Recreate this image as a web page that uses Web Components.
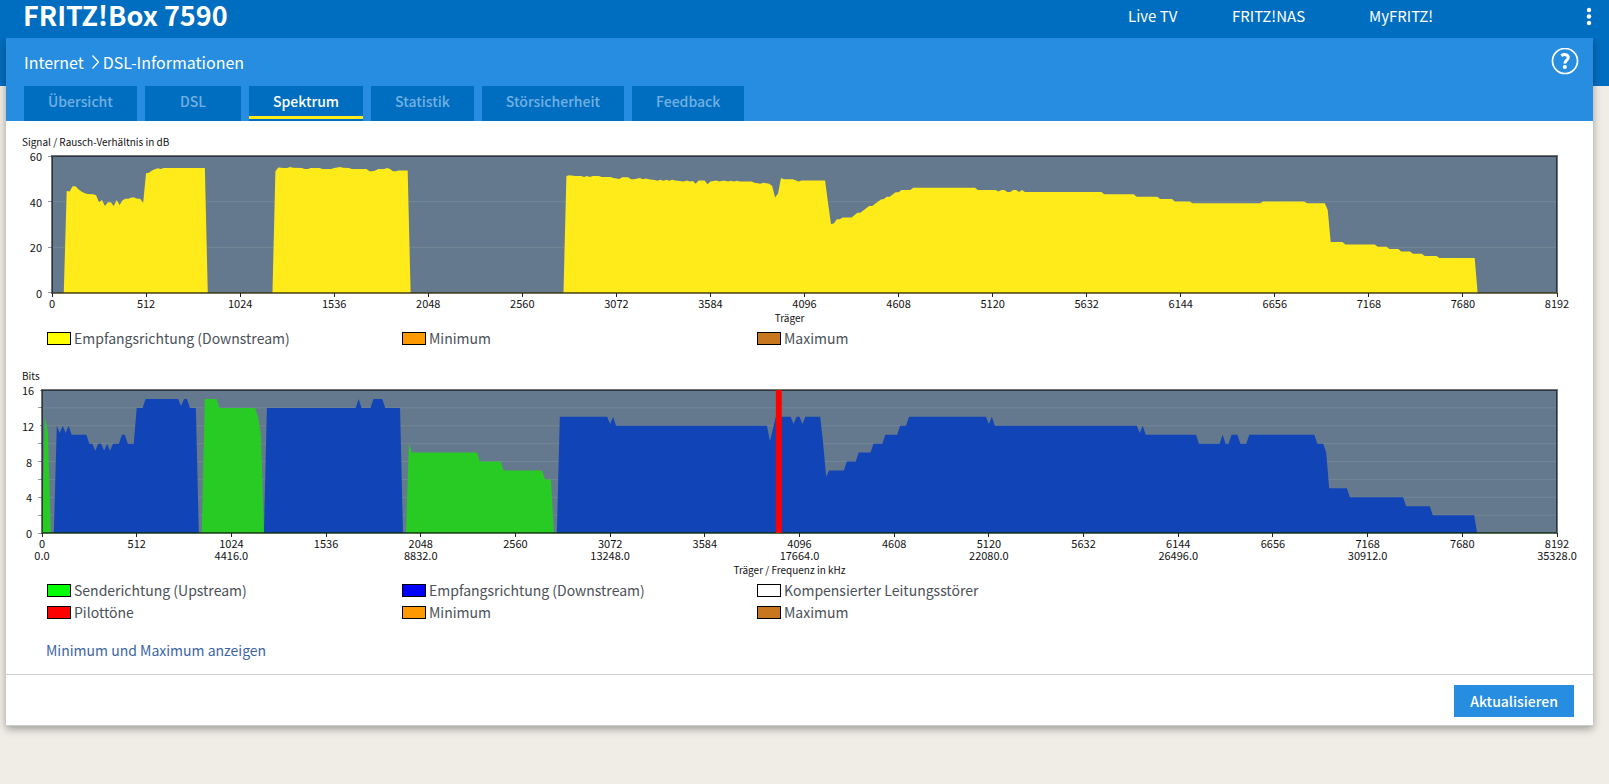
<!DOCTYPE html>
<html lang="de">
<head>
<meta charset="utf-8">
<meta name="viewport" content="width=device-width, initial-scale=1">
<title>FRITZ!Box 7590</title>
<style>
  body { margin: 0; font: 14px/22px "Noto Sans CJK SC", "Noto Sans", sans-serif; color: #4a5157; background: #f0ede6; }
</style>
</head>
<body>
<fritz-app>
  <fritz-header slot="header"></fritz-header>
  <fritz-panel>
    <fritz-tabs slot="tabs"></fritz-tabs>
    <spectrum-chart id="snr"></spectrum-chart>
    <chart-legend id="snr-legend"></chart-legend>
    <spectrum-chart id="bits"></spectrum-chart>
    <chart-legend id="bits-legend"></chart-legend>
    <a slot="link" href="#minmax">Minimum und Maximum anzeigen</a>
  </fritz-panel>
</fritz-app>

<script>
const LEGENDS = {
  'snr-legend': [['#ff0', 'Empfangsrichtung (Downstream)'], ['#f90', 'Minimum'], ['#c7771e', 'Maximum']],
  'bits-legend': [['#0f0', 'Senderichtung (Upstream)'], ['#00f', 'Empfangsrichtung (Downstream)'], ['#fff', 'Kompensierter Leitungsstörer'],
                  ['#f00', 'Pilottöne'], ['#f90', 'Minimum'], ['#c7771e', 'Maximum']]
};

// Each series lists "position value" pairs; one position covers 16 carriers.
const CHARTS = {
  snr: {
    unit: 'Signal / Rausch-Verhältnis in dB', axis: 'Träger', scale: 30, height: 137,
    max: 60, step: 20, label: 20, base: '#ffeb1a',
    series: [['#ffeb1a', `
      4 0 5 44.7 6 44.4 7 46.7 8 46.7 9 45.4 10 44.4 11 43.8 12 43.4 14 43.3 15 42.8 16 39.7 17 40.7 18 38.1 19 39.7 20 39.7
      21 38.1 22 40.7 23 38.5 24 40.6 25 41.3 26 41.3 27 41.8 28 41.8 29 41.3 30 41.3 31 39.4 32 52.5 33 52.7 34 53.7 35 54.2
      36 54.6 37 54.3 38 54.7 52 54.7 53 0
      75 0 76 53.3 77 55 78 54.8 79 54.7 80 54.7 81 55.2 82 54.8 85 54.7 86 54.3 87 54.3 88 54.7 91 54.7 92 54.3 95 54.3
      96 54.7 98 55.2 99 54.8 101 54.7 102 54.3 107 54.3 108 53.3 109 53.3 110 53.7 111 54.3 113 54.3 114 54.7 115 54.3
      116 53.3 117 53.3 118 53.7 121 53.7 122 0
      174 0 175 51.2 176 51.6 178 51.2 180 51.2 181 50.8 182 51.2 183 50.8 184 51.2 186 51.2 187 50.8 190 50.8 191 50.4
      193 49.9 194 50.7 196 50.7 197 49.8 198 49.8 200 50.4 201 49.8 202 50.2 203 49.8 205 49.5 206 49.2 207 49.6 208 49.2
      209 49.6 210 49.2 211 49.6 212 49.3 215 48.8 216 49.3 217 48.8 218 49 219 47.9 220 49.3 222 49.3 223 47.6 224 48.8
      226 49.3 227 48.8 228 49.2 229 49.2 230 48.8 231 49.2 232 48.8 233 49.2 234 48.8 238 48.8 239 48.3 241 47.9 242 48.3
      244 47.9 245 46.9 246 41.8 247 43.6 248 50.4 249 49.8 252 49.8 254 48.8 255 49.3
      263 49.3 264 39.5 265 30.2 266 30.4 267 32.3 268 32.3 269 33.1 272 33.1 274 35.2 275 35.2 278 38.1 279 38.1 282 41
      283 41.2 284 42.2 285 42.2 287 44.1 288 44.1 289 45.1 292 45.1 293 46.1 314 46.1 315 45.1 321 45.1 322 44.4 323 45.1
      324 45.1 325 44.2 326 44.2 327 45.1 328 45.1 329 44.2 330 45.1 331 44.2 357 44.2 358 43.2 368 43.2 369 42.2 376 42.2
      377 41.2 381 41.2 382 40.1 387 40.1 388 39.3 411 39.3 412 40.1 426 40.1 427 39.3 433 39.3 434 36.4 435 22.3 439 22.3
      440 21.2 450 21.2 451 20.3 454 20.3 455 19.3 458 19.3 459 18.2 462 18.2 463 17.2 466 17.2 467 16.2 471 16.2 472 15.3
      484 15.3 485 0`]]
  },
  bits: {
    unit: 'Bits', axis: 'Träger / Frequenz in kHz', scale: 20, height: 143,
    max: 16, step: 2, label: 4, base: '#28cb23', frequency: true, pilot: 248,
    series: [['#28cb23', `
      0 0 1 13 2 11.3 3 0
      54 0 55 15 59 15 60 14 72 14 73 13 74 11 75 0
      123 0 124 10 125 9 147 9 148 8 155 8 156 7 169 7 170 6 172 6 173 0`],
    ['#1145b7', `
      4 0 5 12 6 11.2 7 12 8 11.2 9 12 10 11 15 11 16 10 17 10 18 9.2 19 10 20 10 21 9.2 22 10 23 9.2 24 10 26 10 27 11 28 11
      29 10 31 10 32 14 34 14 35 15 46 15 47 14.2 48 15 49 15 50 14 52 14 53 0
      75 0 76 14 106 14 107 15 108 14 111 14 112 15 115 15 116 14 121 14 122 0
      174 0 175 13 191 13 192 12.2 193 13 194 12 245 12 246 10.3 247 11.6 248 13 253 13 254 12.2 255 13 256 13 257 12.2
      258 13 263 13 264 10 265 6.3 266 7 271 7 272 8 275 8 276 9 280 9 281 10 284 10 285 11 289 11 290 12 292 12 293 13
      319 13 320 12.2 321 13 322 12 370 12 371 11.2 372 12 373 11 390 11 391 10 398 10 399 11 400 10 401 10 402 11 404 11
      405 10 407 10 408 11 430 11 431 10 433 10 434 9 435 5 441 5 442 4 460 4 461 3 469 3 470 2 484 2 485 0`]]
  }
};

const define = (name, html, setup) => {
  const template = document.createElement('template');
  template.innerHTML = html;
  customElements.define(name, class extends HTMLElement {
    constructor() {
      super();
      this.attachShadow({ mode: 'open' }).append(template.content.cloneNode(true));
    }
    connectedCallback() { if (setup) setup(this, this.shadowRoot); }
  });
};

define('fritz-app', `
  <style>
    :host { display: block; min-height: 100vh; background: linear-gradient(#006ec0 86px, #f0ede6 0); }
  </style>
  <slot name="header"></slot><slot></slot>`);

define('fritz-header', `
  <style>
    :host { display: block; height: 38px; color: #fff; font-size: 15px; }
    header { display: flex; align-items: flex-start; padding: 0 12px 0 23px; }
    h1 { margin: 0; flex: 1; font-size: 27px; line-height: 30px; font-weight: 700; white-space: nowrap; }
    nav { display: grid; grid-template-columns: 104px 137px 212px; line-height: 32px; }
    a { color: inherit; text-decoration: none; }
    button { width: 16px; height: 32px; padding: 0; border: 0; background: none; display: block; }
    svg { display: block; }
  </style>
  <header>
    <h1>FRITZ!Box 7590</h1>
    <nav><a href="#tv">Live TV</a><a href="#nas">FRITZ!NAS</a><a href="#my">MyFRITZ!</a></nav>
    <button aria-label="Menü"><svg width="16" height="32" fill="#fff"><circle cx="8" cy="10" r="2.2"/><circle cx="8" cy="16.500" r="2.2"/><circle cx="8" cy="23" r="2.2"/></svg></button>
  </header>`);

define('fritz-tabs', `
  <style>
    :host { display: block; }
    nav { display: flex; gap: 8px; }
    a { box-sizing: border-box; height: 35px; padding: 0 24px; line-height: 30px; font-weight: 500; text-decoration: none; color: #73b0e2; background: #006ec0; }
    a[aria-current] { color: #fff; background: linear-gradient(#ffeb1a, #ffeb1a) 0 30px / 100% 3px no-repeat #006ec0; }
    a.short { padding: 0 35px; }
  </style>
  <nav>
    <a href="#overview">Übersicht</a><a class="short" href="#dsl">DSL</a><a href="#spectrum" aria-current="page">Spektrum</a><a href="#stats">Statistik</a><a href="#stability">Störsicherheit</a><a href="#feedback">Feedback</a>
  </nav>`);

define('fritz-panel', `
  <style>
    :host { display: block; margin: 0 16px 0 6px; background: #fff; box-shadow: 0 1px 0 #ccc, 0 4px 8px rgba(0,0,0,.35); clip-path: inset(0 -16px -20px -6px); }
    .head { background: #268de0; padding: 0 14px 0 18px; color: #fff; }
    .crumbs { display: flex; align-items: center; height: 48px; font-size: 16px; }
    .crumbs a { color: inherit; text-decoration: none; }
    .crumbs .chevron { margin: 0 2px 0 7px; }
    .help { margin-left: auto; width: 28px; height: 28px; padding: 0; border: 0; background: none; }
    svg { display: block; }
    main { padding: 14px 36px 13px 16px; }
    .link { margin: 16px 0 0 24px; }
    ::slotted(a) { color: #3c65a4; text-decoration: none; }
    footer { display: flex; justify-content: flex-end; padding: 10px 19px 8px; border-top: 1px solid #ccd0ce; }
    .refresh { height: 32px; padding: 0 16px; border: 0; font: inherit; font-weight: 500; color: #fff; background: #268de0; }
  </style>
  <div class="head">
    <div class="crumbs">
      <a href="#internet">Internet</a>
      <svg class="chevron" width="10" height="16" fill="none" stroke="#fff" stroke-width="1.3"><path d="M1.500 1.500 7.500 8l-6 6.500"/></svg>
      <span>DSL-Informationen</span>
      <button class="help" aria-label="Hilfe"><svg width="28" height="28" fill="none" stroke="#fff"><circle cx="14" cy="13" r="12.500" stroke-width="1.700"/><path d="M10.300 7.700c2.600-1.900 7-1.300 7 1.900 0 2.500-3.400 2.800-3.400 6" stroke-width="3"/><circle cx="13.800" cy="19" r="2.100" fill="#fff" stroke="none"/></svg></button>
    </div>
    <slot name="tabs"></slot>
  </div>
  <main><slot></slot><div class="link"><slot name="link"></slot></div></main>
  <footer><button class="refresh">Aktualisieren</button></footer>`);

define('chart-legend', `
  <style>
    :host { display: block; margin: 3px 0 20px 25px; }
    :host(:last-of-type) { margin-bottom: 0; }
    ul { display: grid; grid-template-columns: repeat(3, 1fr); max-width: 1065px; margin: 0; padding: 0; list-style: none; }
    li { display: flex; align-items: center; gap: 3px; white-space: nowrap; }
    i { box-sizing: border-box; width: 24px; height: 13px; border: 1px solid #000; }
  </style>
  <ul></ul>`, (el, root) => {
    root.querySelector('ul').innerHTML = LEGENDS[el.id]
      .map(([color, text]) => `<li><i style="background:${color}"></i><span>${text}</span></li>`).join('');
  });

define('spectrum-chart', `
  <style>
    :host { display: block; color: #111; font-size: 11px; line-height: 12px; }
    .unit, .axis { font-size: 10px; line-height: 14px; }
    .unit { margin-bottom: 7px; }
    .axis { text-align: center; line-height: 12px; margin-top: 3px; }
    .plot { display: grid; grid-template-columns: var(--scale) 1fr; }
    .y { display: flex; flex-direction: column; justify-content: space-between; }
    .y span { display: flex; align-items: center; justify-content: flex-end; gap: 6px; height: 0; }
    .y span::after { content: ""; width: 4px; height: 1px; background: #8d9cab; }
    svg { display: block; width: 100%; height: var(--height); overflow: visible; }
    svg * { vector-effect: non-scaling-stroke; }
    .x { grid-column: 2; display: flex; justify-content: space-between; }
    .x span { width: 0; display: flex; flex-direction: column; align-items: center; white-space: nowrap; }
    .x span::before { content: ""; width: 1px; height: 4px; flex: none; background: #222; }
    .x b { font-weight: 400; }
  </style>
  <div class="unit"></div>
  <div class="plot"><div class="y"></div><svg preserveAspectRatio="none"></svg><div class="x"></div></div>
  <div class="axis"></div>`, (el, root) => {
    const c = CHARTS[el.id];
    const $ = s => root.querySelector(s);
    el.style.setProperty('--scale', c.scale + 'px');
    el.style.setProperty('--height', c.height + 'px');
    $('.unit').textContent = c.unit;
    $('.axis').textContent = c.axis;
    let y = '', grid = '', x = '';
    for (let v = c.max; v >= 0; v -= c.step) {
      y += `<span>${v % c.label ? '' : v}</span>`;
      if (v && v < c.max) grid += `<path d="M0 ${c.max - v}H512" stroke="#fff" stroke-opacity=".1"/>`;
    }
    for (let i = 0; i <= 16; i++)
      x += `<span>${i * 512}${c.frequency && i % 2 === 0 ? `<b>${(i * 2208).toFixed(1)}</b>` : ''}</span>`;
    $('.y').innerHTML = y;
    $('.x').innerHTML = x;
    const areas = c.series.map(([color, data]) => {
      const n = data.trim().split(/\s+/).map(Number);
      let d = `M0 ${c.max}`;
      for (let i = 0; i < n.length; i += 2) d += `L${n[i]} ${+(c.max - n[i + 1]).toFixed(2)}`;
      return `<path d="${d}L512 ${c.max}" fill="${color}"/>`;
    }).join('');
    const svg = $('svg');
    svg.setAttribute('viewBox', `0 0 512 ${c.max}`);
    svg.innerHTML = `<rect width="512" height="${c.max}" fill="#64798d"/>${grid}${areas}
      <path d="M0 ${c.max}H512" stroke="${c.base}" stroke-opacity=".6"/>
      <rect width="512" height="${c.max}" fill="none" stroke="#000" stroke-opacity=".55" stroke-width="2"/>
      ${c.pilot ? `<rect x="${c.pilot}" width="2" height="${c.max}" fill="#f00"/>` : ''}`;
  });
</script>
</body>
</html>
